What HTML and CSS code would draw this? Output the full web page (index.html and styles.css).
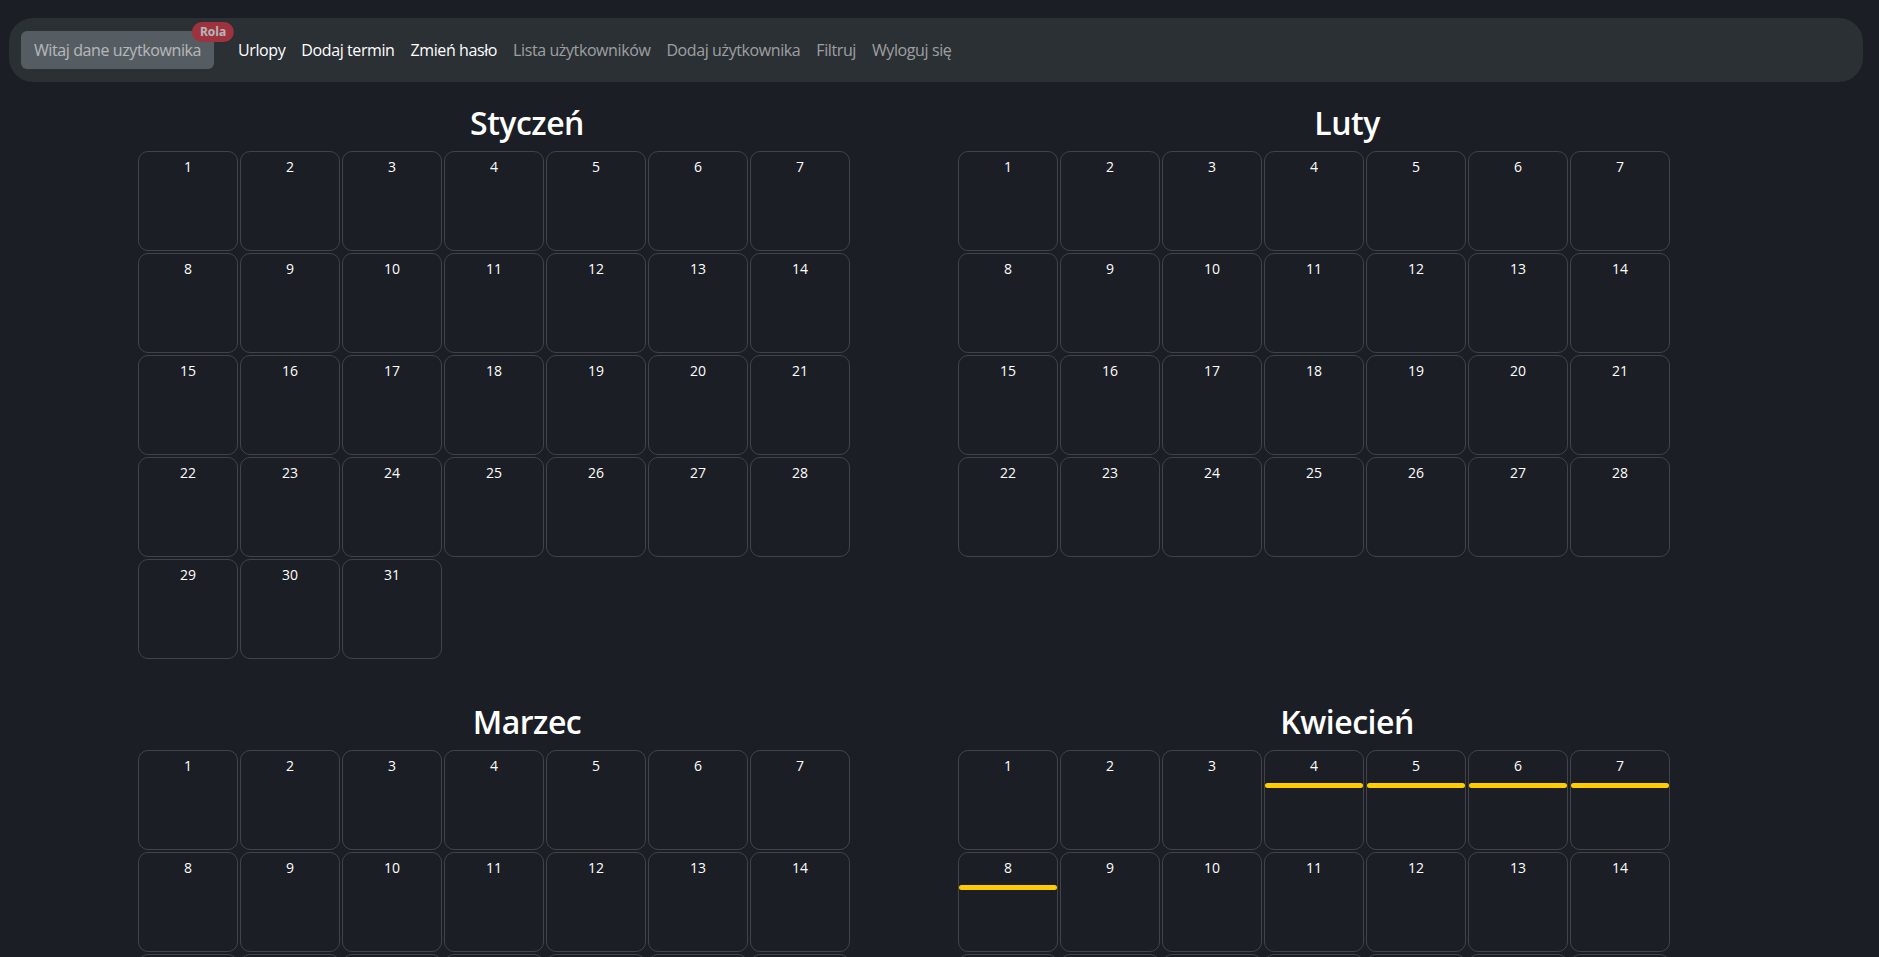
FILE: index.html
```html
<!DOCTYPE html>
<html lang="pl">
<head>
    <meta charset="UTF-8">
    <meta name="viewport" content="width=device-width, initial-scale=1.0">
    <title>Urlopy</title>
    <link rel="stylesheet" href="styles.css">
</head>
<body>
    <nav class="topbar">
        <button class="welcome-btn" disabled>
            Witaj dane uzytkownika
            <span class="role-badge">Rola</span>
        </button>
        <ul class="nav-links">
            <li><a href="#" class="nav-link active">Urlopy</a></li>
            <li><a href="#" class="nav-link active">Dodaj termin</a></li>
            <li><a href="#" class="nav-link active">Zmień hasło</a></li>
            <li><a href="#" class="nav-link">Lista użytkowników</a></li>
            <li><a href="#" class="nav-link">Dodaj użytkownika</a></li>
            <li><a href="#" class="nav-link">Filtruj</a></li>
            <li><a href="#" class="nav-link">Wyloguj się</a></li>
        </ul>
    </nav>

    <main class="year" id="year"></main>

    <script>
        var months = [
            { name: "Styczeń", days: 31 },
            { name: "Luty", days: 28 },
            { name: "Marzec", days: 31 },
            { name: "Kwiecień", days: 30 },
            { name: "Maj", days: 31 },
            { name: "Czerwiec", days: 30 },
            { name: "Lipiec", days: 31 },
            { name: "Sierpień", days: 31 },
            { name: "Wrzesień", days: 30 },
            { name: "Październik", days: 31 },
            { name: "Listopad", days: 30 },
            { name: "Grudzień", days: 31 }
        ];

        // Booked leave days, keyed by month index
        var leaves = {
            3: [4, 5, 6, 7, 8]
        };

        // Build one block per month with a cell for every day
        function renderYear() {
            var year = document.getElementById("year");
            for (var m = 0; m < months.length; m++) {
                var month = document.createElement("section");
                month.className = "month";

                var title = document.createElement("h2");
                title.className = "month-name";
                title.textContent = months[m].name;
                month.appendChild(title);

                var days = document.createElement("div");
                days.className = "days";
                var booked = leaves[m] || [];
                for (var d = 1; d <= months[m].days; d++) {
                    var cell = document.createElement("div");
                    cell.className = "day";
                    var num = document.createElement("span");
                    num.className = "day-num";
                    num.textContent = d;
                    cell.appendChild(num);
                    if (booked.indexOf(d) !== -1) {
                        var bar = document.createElement("div");
                        bar.className = "leave";
                        cell.appendChild(bar);
                    }
                    days.appendChild(cell);
                }
                month.appendChild(days);
                year.appendChild(month);
            }
        }

        renderYear();
    </script>
</body>
</html>
```

FILE: styles.css
```css
body {
    margin: 0;
    background-color: #1b1e24;
    color: #fff;
    font-family: "Open Sans", "Noto Sans", sans-serif;
}
.topbar {
    display: flex;
    align-items: center;
    height: 64px;
    margin: 18px 16px 0 9px;
    padding: 0 12px;
    background-color: #2b3035;
    border-radius: 24px;
}
.welcome-btn {
    position: relative;
    height: 38px;
    margin-right: 16px;
    padding: 0 12px;
    border: 1px solid transparent;
    border-radius: 6px;
    background-color: #6c757d;
    color: #fff;
    font-family: inherit;
    font-size: 16px;
    letter-spacing: -0.4px;
    opacity: 0.65;
}
.role-badge {
    position: absolute;
    top: 0;
    left: 100%;
    transform: translate(-50%, -50%);
    padding: 4px 8px;
    border-radius: 10px;
    background-color: #dc3545;
    color: #fff;
    font-size: 12px;
    font-weight: 700;
    line-height: 1;
    letter-spacing: 0;
}
.nav-links {
    display: flex;
    list-style: none;
    margin: 0;
    padding: 0;
}
.nav-link {
    display: block;
    padding: 8px;
    color: rgba(255, 255, 255, 0.55);
    font-size: 16px;
    letter-spacing: -0.4px;
    text-decoration: none;
}
.nav-link.active {
    color: #fff;
}
.year {
    display: grid;
    grid-template-columns: repeat(2, 820px);
    margin: 23px 0 0 117px;
}
.month {
    padding: 0 21px;
    margin-bottom: 45px;
}
.month-name {
    margin: 0 0 10px;
    font-size: 32px;
    font-weight: 600;
    line-height: 36px;
    text-align: center;
    letter-spacing: -0.5px;
}
.days {
    display: grid;
    grid-template-columns: repeat(7, 100px);
    grid-auto-rows: 100px;
    gap: 2px;
}
.day {
    box-sizing: border-box;
    padding-top: 4px;
    border: 1px solid #404448;
    border-radius: 10px;
    text-align: center;
}
.day-num {
    display: block;
    font-size: 14px;
    line-height: 21px;
}
.leave {
    height: 5px;
    margin-top: 7px;
    border-radius: 3px;
    background-color: #ffcc00;
}
```
